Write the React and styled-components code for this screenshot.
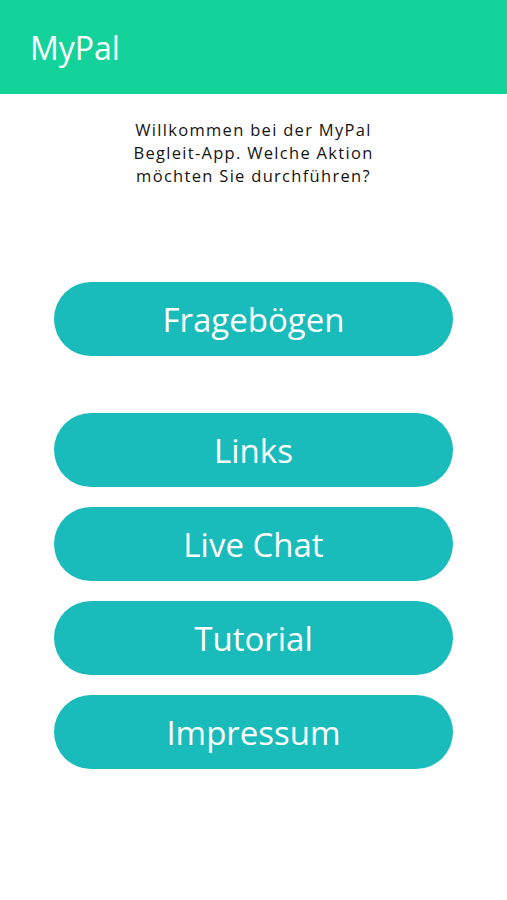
import React from 'react';
import styled, { createGlobalStyle } from 'styled-components';

const GlobalStyle = createGlobalStyle`
  html, body {
    margin: 0;
    padding: 0;
    background: #fff;
    font-family: "Open Sans", "Noto Sans", sans-serif;
  }
`;

const Page = styled.div`
  width: 507px;
  min-height: 900px;
  background: #fff;
`;

const Header = styled.header`
  height: 94px;
  background: #13d39b;
  display: flex;
  align-items: center;
  padding: 0 30px;
  box-sizing: border-box;
`;

const Title = styled.h1`
  margin: 0;
  color: #fff;
  font-size: 32px;
  font-weight: 400;
`;

const Intro = styled.p`
  margin: 24px 0 0;
  text-align: center;
  color: #141414;
  font-size: 16.5px;
  line-height: 23px;
  letter-spacing: 1.3px;
`;

const Actions = styled.nav`
  display: flex;
  flex-direction: column;
  gap: 20px;
  padding: 95px 54px 0;
`;

const ActionButton = styled.button`
  height: 74px;
  width: 100%;
  border: none;
  border-radius: 37px;
  background: #19bbbb;
  color: #fff;
  font-family: inherit;
  font-size: 33px;
  font-weight: 400;
  cursor: pointer;
  margin-bottom: ${(p) => (p.$spaced ? '37px' : '0')};
`;

const items = ['Fragebögen', 'Links', 'Live Chat', 'Tutorial', 'Impressum'];

export default function App() {
  return (
    <Page>
      <GlobalStyle />
      <Header>
        <Title>MyPal</Title>
      </Header>
      <Intro>
        Willkommen bei der MyPal
        <br />
        Begleit-App. Welche Aktion
        <br />
        möchten Sie durchführen?
      </Intro>
      <Actions>
        {items.map((label, i) => (
          <ActionButton key={label} $spaced={i === 0}>
            {label}
          </ActionButton>
        ))}
      </Actions>
    </Page>
  );
}
